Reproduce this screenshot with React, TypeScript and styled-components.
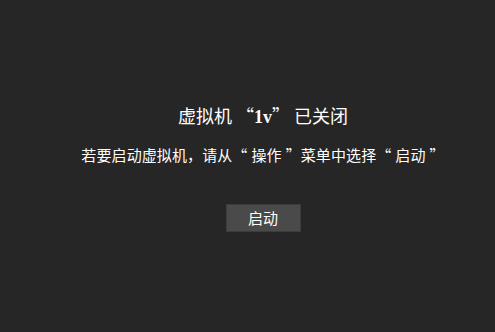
import React from 'react';
import styled, { createGlobalStyle } from 'styled-components';

const GlobalStyle = createGlobalStyle`
  html, body {
    margin: 0;
    padding: 0;
    background: #262626;
  }
  body {
    font-family: "Noto Sans CJK SC", "Liberation Sans", sans-serif;
    color: #ffffff;
  }
`;

// content is centred in the area right of a 31px gutter
const Screen = styled.div`
  width: 100%;
  height: 100vh;
  display: flex;
  flex-direction: column;
  align-items: center;
  padding: 103px 0 0 31px;
  box-sizing: border-box;
`;

const Title = styled.h1`
  margin: 0;
  font-size: 18px;
  font-weight: 400;
  line-height: 24px;
  color: #ffffff;
  white-space: pre;
`;

const Latin = styled.span`
  font-family: "Liberation Serif", serif;
  font-weight: 700;
`;

const Hint = styled.p`
  margin: 16px 0 0;
  font-size: 15px;
  font-weight: 400;
  line-height: 20px;
  letter-spacing: 0.1px;
  color: #ffffff;
  white-space: pre;
`;

// the quoted word keeps some air between itself and the quote marks
const Quoted = styled.span`
  margin: 0 4px;
`;

const StartButton = styled.button`
  margin-top: 39px;
  width: 75px;
  height: 28px;
  padding: 0;
  background: #4a4a4a;
  border: 1px solid #3c3c3c;
  color: #ffffff;
  font-family: "Noto Sans CJK SC", "Liberation Sans", sans-serif;
  font-size: 15px;
  line-height: 26px;
  cursor: pointer;
  &:hover {
    background: #555555;
  }
`;

export default function App() {
  return (
    <>
      <GlobalStyle />
      <Screen>
        <Title>
          虚拟机 “<Latin>1v</Latin>” 已关闭
        </Title>
        <Hint>
          若要启动虚拟机，请从“<Quoted>操作</Quoted>”菜单中选择“<Quoted>启动</Quoted>”
        </Hint>
        <StartButton>启动</StartButton>
      </Screen>
    </>
  );
}
